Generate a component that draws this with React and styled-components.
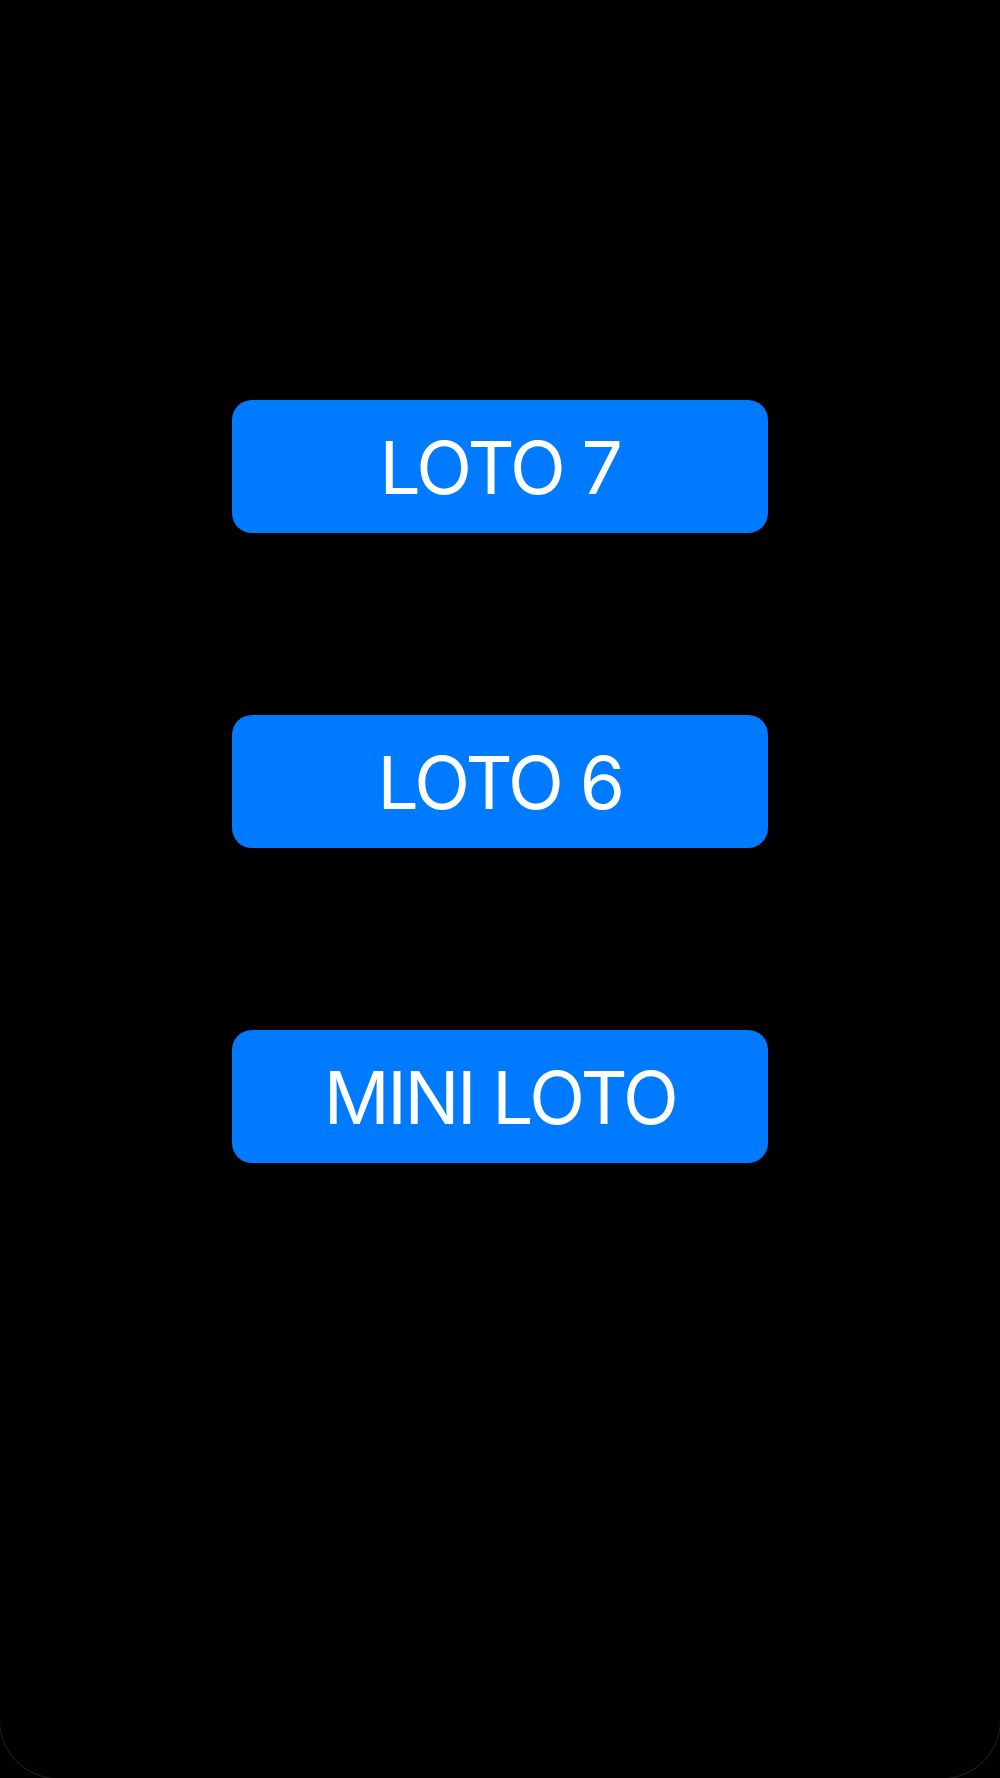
import React from 'react';
import styled, { createGlobalStyle } from 'styled-components';

const GlobalStyle = createGlobalStyle`
  html, body {
    margin: 0;
    padding: 0;
    background: #000;
  }
  body {
    font-family: Inter, "Noto Sans", sans-serif;
  }
`;

const games = ['LOTO 7', 'LOTO 6', 'MINI LOTO'];

const App = () => {
  return (
    <>
      <GlobalStyle />
      <Screen>
        <Menu>
          {games.map((name) => (
            <GameButton key={name} type='button'>
              {name}
            </GameButton>
          ))}
        </Menu>
      </Screen>
    </>
  );
};

const Screen = styled.main`
  box-sizing: border-box;
  height: 1778px;
  background: #000;
  border-bottom-left-radius: 58px;
  border-bottom-right-radius: 58px;
  box-shadow: 0 0 0 1px rgba(255, 255, 255, 0.12);
  padding-top: 400px;
  overflow: hidden;
`;

const Menu = styled.div`
  display: flex;
  flex-direction: column;
  align-items: center;
  gap: 182px;
`;

const GameButton = styled.button`
  width: 536px;
  height: 133px;
  border: none;
  border-radius: 20px;
  background: #007aff;
  color: #fff;
  font-family: Inter, "Noto Sans", sans-serif;
  font-size: 73px;
  font-weight: 400;
  letter-spacing: -2.4px;
  display: flex;
  align-items: center;
  justify-content: center;
  padding: 2px 0 0;
  cursor: pointer;
`;

export default App;
